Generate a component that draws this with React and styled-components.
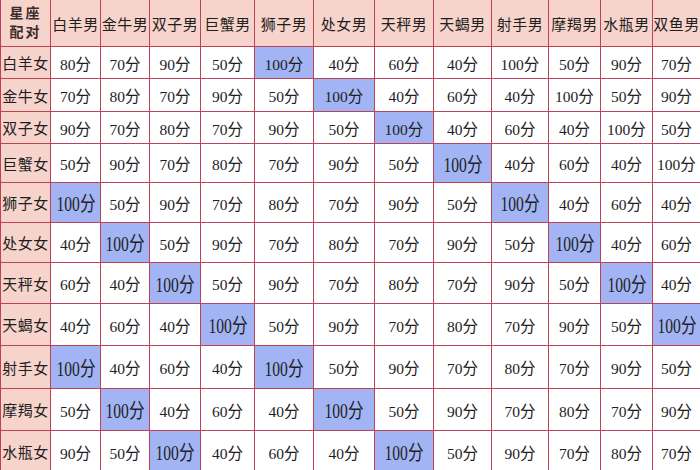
import React from "react";
import styled, { createGlobalStyle } from "styled-components";

const GlobalStyle = createGlobalStyle`
  html, body { margin:0; padding:0; background:#fff; }
  body { font-family:"Liberation Serif","Noto Sans CJK SC",serif; }
`

const COLS = [49, 49, 48, 50, 53, 58, 60, 58, 57, 56, 51, 51]
const ROWS = [46, 31, 32, 31, 38, 39, 39, 40, 41, 42, 41, 41]

const Grid = styled.div`
  width:700px;height:470px;overflow:hidden;box-sizing:border-box;
  display:grid;gap:1px;padding-left:1px;
  grid-template-columns:${COLS.map(c => c + "px").join(" ")} 1fr;
  grid-template-rows:${ROWS.map(r => r + "px").join(" ")};
  background:#bd4257;
`
const Cell = styled.div`
  display:flex;align-items:center;justify-content:center;
  color:#1e1e1e;white-space:nowrap;overflow:hidden;
`
const Corner = styled(Cell)`
  background:#f6d4cb;flex-direction:column;
  font-size:14px;font-weight:bold;line-height:19px;letter-spacing:2px;color:#3b2a2a;
`
const HeadCell = styled(Cell)`
  background:#f6d4cb;font-size:15px;letter-spacing:0.5px;
`
const RowLabel = styled(Cell)`
  background:#f6d4cb;font-size:15px;letter-spacing:0.5px;
`
const Score = styled(Cell)`
  background:${p => (p.$hit ? "#a2b4f4" : "#fff")};
  font-size:15.5px;
  span{
    display:inline-block;
    ${p => p.$big && "font-size:20px;transform:scaleX(0.78);"}
  }
`

const men = ["白羊男", "金牛男", "双子男", "巨蟹男", "狮子男", "处女男", "天秤男", "天蝎男", "射手男", "摩羯男", "水瓶男", "双鱼男"]

// 分数 + 高亮列
const data = [
  ["白羊女", [80, 70, 90, 50, 100, 40, 60, 40, 100, 50, 90, 70], [4]],
  ["金牛女", [70, 80, 70, 90, 50, 100, 40, 60, 40, 100, 50, 90], [5]],
  ["双子女", [90, 70, 80, 70, 90, 50, 100, 40, 60, 40, 100, 50], [6]],
  ["巨蟹女", [50, 90, 70, 80, 70, 90, 50, 100, 40, 60, 40, 100], [7]],
  ["狮子女", [100, 50, 90, 70, 80, 70, 90, 50, 100, 40, 60, 40], [0, 8]],
  ["处女女", [40, 100, 50, 90, 70, 80, 70, 90, 50, 100, 40, 60], [1, 9]],
  ["天秤女", [60, 40, 100, 50, 90, 70, 80, 70, 90, 50, 100, 40], [2, 10]],
  ["天蝎女", [40, 60, 40, 100, 50, 90, 70, 80, 70, 90, 50, 100], [3, 11]],
  ["射手女", [100, 40, 60, 40, 100, 50, 90, 70, 80, 70, 90, 50], [0, 4]],
  ["摩羯女", [50, 100, 40, 60, 40, 100, 50, 90, 70, 80, 70, 90], [1, 5]],
  ["水瓶女", [90, 50, 100, 40, 60, 40, 100, 50, 90, 70, 80, 70], [2, 6]],
]

function App() {
  return (
    <>
      <GlobalStyle />
      <Grid>
        <Corner>
          <span>星座</span>
          <span>配对</span>
        </Corner>
        {men.map(m => (
          <HeadCell key={m}>{m}</HeadCell>
        ))}
        {data.map(([name, scores, hits], r) => (
          <React.Fragment key={name}>
            <RowLabel>{name}</RowLabel>
            {scores.map((s, i) => {
              const hit = hits.includes(i)
              return (
                <Score key={i} $hit={hit} $big={hit && r >= 3}>
                  <span>{s}分</span>
                </Score>
              )
            })}
          </React.Fragment>
        ))}
      </Grid>
    </>
  );
}

export default App;
